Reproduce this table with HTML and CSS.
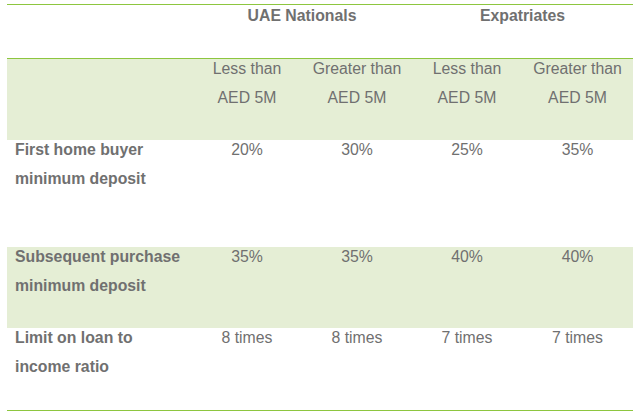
FILE: index.html
```html
<!DOCTYPE html>
<html>
<head>
<meta charset="utf-8">
<link rel="stylesheet" href="styles.css">
</head>
<body>
<table class="rates">
  <colgroup>
    <col class="c-label">
    <col class="c-val">
    <col class="c-val">
    <col class="c-val">
    <col class="c-last">
  </colgroup>
  <tr class="r-group">
    <td></td>
    <td colspan="2" class="bold"><div class="t">UAE Nationals</div></td>
    <td colspan="2" class="bold"><div class="t">Expatriates</div></td>
  </tr>
  <tr class="r-sub shade">
    <td></td>
    <td><div class="t">Less than<br>AED 5M</div></td>
    <td><div class="t">Greater than<br>AED 5M</div></td>
    <td><div class="t">Less than<br>AED 5M</div></td>
    <td><div class="t">Greater than<br>AED 5M</div></td>
  </tr>
  <tr class="r-first">
    <td class="label"><div class="t">First home buyer<br>minimum deposit</div></td>
    <td><div class="t">20%</div></td>
    <td><div class="t">30%</div></td>
    <td><div class="t">25%</div></td>
    <td><div class="t">35%</div></td>
  </tr>
  <tr class="r-sub shade">
    <td class="label"><div class="t">Subsequent purchase<br>minimum deposit</div></td>
    <td><div class="t">35%</div></td>
    <td><div class="t">35%</div></td>
    <td><div class="t">40%</div></td>
    <td><div class="t">40%</div></td>
  </tr>
  <tr class="r-last">
    <td class="label"><div class="t">Limit on loan to<br>income ratio</div></td>
    <td><div class="t">8 times</div></td>
    <td><div class="t">8 times</div></td>
    <td><div class="t">7 times</div></td>
    <td><div class="t">7 times</div></td>
  </tr>
</table>
</body>
</html>
```
FILE: styles.css
```css
html, body {
  margin: 0;
  padding: 0;
  background: #ffffff;
}
body {
  padding: 4px 6px 0 7px;
  font-family: "Liberation Sans", Arial, Helvetica, sans-serif;
  font-size: 15.8px;
  color: #707070;
}
.rates {
  border-collapse: collapse;
  table-layout: fixed;
  width: 626px;
  border-top: 1px solid #8dc63f;
  border-bottom: 1px solid #8dc63f;
}
.c-label { width: 185px; }
.c-val { width: 110px; }
.c-last { width: 111px; }
.rates td {
  padding: 0;
  vertical-align: top;
  text-align: center;
  line-height: 29px;
  overflow: visible;
}
.rates td.label {
  text-align: left;
  padding-left: 8px;
  font-weight: bold;
}
.rates td.bold {
  font-weight: bold;
}
.t {
  margin-top: -5px;
  white-space: nowrap;
}
.r-group td {
  height: 53px;
  border-bottom: 1px solid #8dc63f;
}
.r-group .t {
  margin-top: -4px;
}
.shade td {
  background: #e5eed5;
}
.r-sub td { height: 81px; }
.r-first td { height: 107px; }
.r-last td { height: 82px; }
```
